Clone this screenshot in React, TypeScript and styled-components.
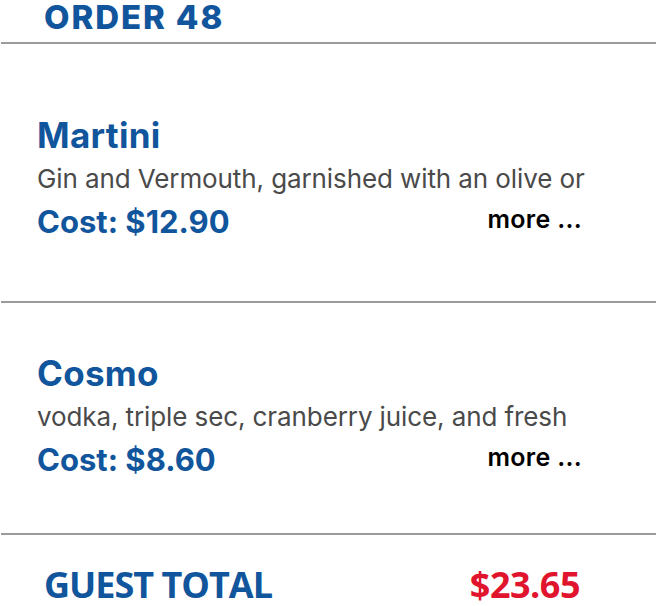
import React from "react";
import styled, { createGlobalStyle } from "styled-components";

const Global = createGlobalStyle`
  html, body { margin: 0; padding: 0; background: #ffffff; }
  body { font-family: Inter, "Noto Sans", sans-serif; }
`;

const BLUE = "#11559c";
const RED = "#e0142c";
const RULE = "#9b9b9e";

const Page = styled.div`
  width: 658px;
  display: flex;
  flex-direction: column;
`;

const Header = styled.header`
  height: 42px;
  padding-left: 44px;
  border-bottom: 2px solid ${RULE};
  margin: 0 2px 0 1px;
  box-sizing: content-box;
  display: flex;
  align-items: flex-start;
`;

const OrderTitle = styled.h1`
  margin: -1px 0 0 -1px;
  font-family: Inter, sans-serif;
  font-weight: 800;
  font-size: 33px;
  line-height: 36px;
  letter-spacing: 1.9px;
  color: ${BLUE};
`;

const Item = styled.section<{ $top: number; $bottom: number }>`
  padding: ${(p) => p.$top}px 76px ${(p) => p.$bottom}px 37px;
  border-bottom: 2px solid ${RULE};
  margin: 0 2px 0 1px;
  display: flex;
  flex-direction: column;
`;

const Name = styled.h2`
  margin: 0 0 0 -1px;
  font-family: Inter, sans-serif;
  font-weight: 700;
  font-size: 35px;
  line-height: 40px;
  letter-spacing: 0.3px;
  color: ${BLUE};
`;

const Description = styled.p`
  margin: 9px 0 0 -1px;
  font-family: Inter, sans-serif;
  font-weight: 400;
  font-size: 26px;
  line-height: 30px;
  letter-spacing: -0.1px;
  color: #4a4a4a;
  white-space: nowrap;
`;

const CostRow = styled.div`
  margin-top: 10px;
  display: flex;
  justify-content: space-between;
  align-items: flex-start;
`;

const Cost = styled.span`
  font-family: Inter, sans-serif;
  font-weight: 700;
  font-size: 31px;
  line-height: 36px;
  color: ${BLUE};
  margin-left: -1px;
`;

const More = styled.button`
  border: 0;
  background: none;
  padding: 0;
  margin: 0 -2px 0 0;
  font-family: Inter, sans-serif;
  font-weight: 600;
  font-size: 25px;
  line-height: 30px;
  letter-spacing: 0.3px;
  color: #000;
  cursor: pointer;
`;

const Footer = styled.footer`
  padding: 30px 78px 0 44px;
  display: flex;
  justify-content: space-between;
  align-items: flex-start;
`;

const TotalText = styled.span<{ $red?: boolean }>`
  font-family: "Open Sans", "Liberation Sans Narrow", sans-serif;
  font-weight: 700;
  font-stretch: 88%;
  font-size: 36px;
  line-height: 40px;
  letter-spacing: ${(p) => (p.$red ? "-0.5px" : "-1px")};
  color: ${(p) => (p.$red ? RED : BLUE)};
`;

const items = [
  {
    name: "Martini",
    desc: "Gin and Vermouth, garnished with an olive or",
    cost: "$12.90",
    top: 71,
    bottom: 61,
  },
  {
    name: "Cosmo",
    desc: "vodka, triple sec, cranberry juice, and fresh",
    cost: "$8.60",
    top: 50,
    bottom: 55,
  },
];

export default function App() {
  return (
    <Page>
      <Global />
      <Header>
        <OrderTitle>ORDER 48</OrderTitle>
      </Header>
      {items.map((it) => (
        <Item key={it.name} $top={it.top} $bottom={it.bottom}>
          <Name>{it.name}</Name>
          <Description>{it.desc}</Description>
          <CostRow>
            <Cost>Cost: {it.cost}</Cost>
            <More>more ...</More>
          </CostRow>
        </Item>
      ))}
      <Footer>
        <TotalText>GUEST TOTAL</TotalText>
        <TotalText $red>$23.65</TotalText>
      </Footer>
    </Page>
  );
}
